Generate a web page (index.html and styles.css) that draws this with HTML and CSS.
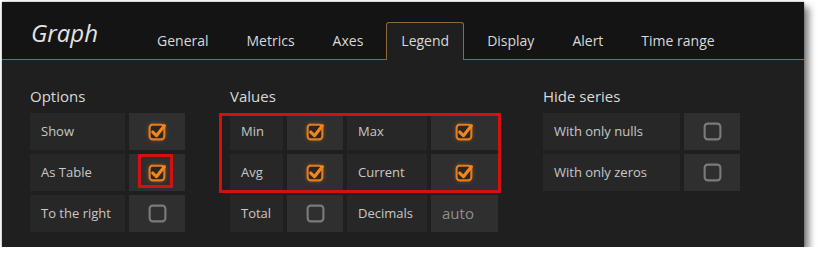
FILE: index.html
```html
<!DOCTYPE html>
<html lang="en">
<head>
    <meta charset="UTF-8">
    <title>Graph - Legend</title>
    <link rel="stylesheet" href="styles.css">
</head>
<body>
    <div class="panel">
        <div class="panel-header">
            <span class="panel-title">Graph</span>
            <ul class="tabs">
                <li>General</li>
                <li>Metrics</li>
                <li>Axes</li>
                <li class="active">Legend</li>
                <li>Display</li>
                <li>Alert</li>
                <li>Time range</li>
            </ul>
        </div>
        <div class="panel-body">
            <div class="section">
                <h5>Options</h5>
                <div class="grid grid-options">
                    <div class="label">Show</div>
                    <div class="check"><svg class="cb on" viewBox="0 0 20 20"><rect x="2.5" y="3.5" width="14" height="14" rx="3"/><path d="M5.5 10.5 L9 14 L16.5 4.5"/></svg></div>
                    <div class="label">As Table</div>
                    <div class="check marked"><svg class="cb on" viewBox="0 0 20 20"><rect x="2.5" y="3.5" width="14" height="14" rx="3"/><path d="M5.5 10.5 L9 14 L16.5 4.5"/></svg><span class="red-box small"></span></div>
                    <div class="label">To the right</div>
                    <div class="check"><svg class="cb" viewBox="0 0 20 20"><rect x="2.5" y="2.5" width="15" height="15" rx="3"/></svg></div>
                </div>
            </div>
            <div class="section">
                <h5>Values</h5>
                <div class="grid grid-values">
                    <div class="label">Min</div>
                    <div class="check"><svg class="cb on" viewBox="0 0 20 20"><rect x="2.5" y="3.5" width="14" height="14" rx="3"/><path d="M5.5 10.5 L9 14 L16.5 4.5"/></svg></div>
                    <div class="label">Max</div>
                    <div class="check"><svg class="cb on" viewBox="0 0 20 20"><rect x="2.5" y="3.5" width="14" height="14" rx="3"/><path d="M5.5 10.5 L9 14 L16.5 4.5"/></svg></div>
                    <div class="label">Avg</div>
                    <div class="check"><svg class="cb on" viewBox="0 0 20 20"><rect x="2.5" y="3.5" width="14" height="14" rx="3"/><path d="M5.5 10.5 L9 14 L16.5 4.5"/></svg></div>
                    <div class="label">Current</div>
                    <div class="check"><svg class="cb on" viewBox="0 0 20 20"><rect x="2.5" y="3.5" width="14" height="14" rx="3"/><path d="M5.5 10.5 L9 14 L16.5 4.5"/></svg></div>
                    <div class="label">Total</div>
                    <div class="check"><svg class="cb" viewBox="0 0 20 20"><rect x="2.5" y="2.5" width="15" height="15" rx="3"/></svg></div>
                    <div class="label">Decimals</div>
                    <div class="input">auto</div>
                    <span class="red-box big"></span>
                </div>
            </div>
            <div class="section">
                <h5>Hide series</h5>
                <div class="grid grid-hide">
                    <div class="label">With only nulls</div>
                    <div class="check"><svg class="cb" viewBox="0 0 20 20"><rect x="2.5" y="2.5" width="15" height="15" rx="3"/></svg></div>
                    <div class="label">With only zeros</div>
                    <div class="check"><svg class="cb" viewBox="0 0 20 20"><rect x="2.5" y="2.5" width="15" height="15" rx="3"/></svg></div>
                </div>
            </div>
        </div>
    </div>
</body>
</html>
```

FILE: styles.css
```css
body {
    margin: 0;
    background: #fff;
    font-family: "Open Sans", "Liberation Sans", sans-serif;
}
.panel {
    margin: 2px 0 0 2px;
    width: 802px;
    height: 245px;
    background: #1f1f1f;
    box-shadow: 5px 5px 7px rgba(0, 0, 0, 0.5), 0 0 2px rgba(0, 0, 0, 0.4);
}
.panel-header {
    height: 58px;
    background: #141414;
    border-bottom: 1px solid #8c6a3c;
    display: flex;
    align-items: flex-end;
    box-sizing: border-box;
}
.panel-title {
    font-size: 24px;
    font-style: italic;
    color: #e3e3e3;
    padding: 0 0 10px 29px;
    width: 111px;
}
.tabs {
    list-style: none;
    margin: 0 0 -1px 0;
    padding: 0;
    display: flex;
}
.tabs li {
    font-size: 14px;
    color: #d8d9da;
    height: 37px;
    line-height: 36px;
    padding: 0 14px;
    margin-right: 8px;
    box-sizing: border-box;
    border: 1px solid transparent;
    border-bottom: none;
}
.tabs li.active {
    background: #1f1f1f;
    border-color: #8c6a3c;
    border-radius: 3px 3px 0 0;
    height: 38px;
}
.panel-body {
    display: flex;
    gap: 45px;
    padding: 0 0 0 28px;
}
.section h5 {
    margin: 0;
    font-weight: normal;
    font-size: 15px;
    color: #d8d9da;
    height: 53px;
    line-height: 20px;
    box-sizing: border-box;
    padding-top: 26px;
}
.grid {
    display: grid;
    gap: 4px;
    grid-auto-rows: 37px;
    position: relative;
}
.grid-options {
    grid-template-columns: 95px 56px;
}
.grid-values {
    grid-template-columns: 53px 56px 80px 67px;
}
.grid-hide {
    grid-template-columns: 137px 56px;
}
.label {
    background: #272727;
    color: #c8c8c8;
    font-size: 13px;
    line-height: 37px;
    padding-left: 11px;
    white-space: nowrap;
}
.check {
    background: #2f2f2f;
    display: flex;
    justify-content: center;
    align-items: center;
    position: relative;
}
.input {
    background: #2f2f2f;
    color: #8e8e8e;
    font-size: 15px;
    line-height: 37px;
    padding-left: 11px;
}
.cb {
    width: 21px;
    height: 21px;
    fill: none;
    stroke: #7b7b7b;
    stroke-width: 2;
}
.cb.on rect {
    stroke: #e27d24;
    fill: #2b2620;
}
.cb.on path {
    stroke: #f0861d;
    stroke-width: 3;
    stroke-linecap: round;
    stroke-linejoin: round;
}
.cb.on {
    filter: drop-shadow(0 0 2px rgba(235, 123, 24, 0.35));
}
.red-box {
    position: absolute;
    border: 3px solid #d41111;
    box-sizing: border-box;
}
.red-box.small {
    left: 9px;
    top: 0;
    width: 35px;
    height: 34px;
}
.red-box.big {
    left: -11px;
    top: 0;
    width: 282px;
    height: 80px;
}
```
